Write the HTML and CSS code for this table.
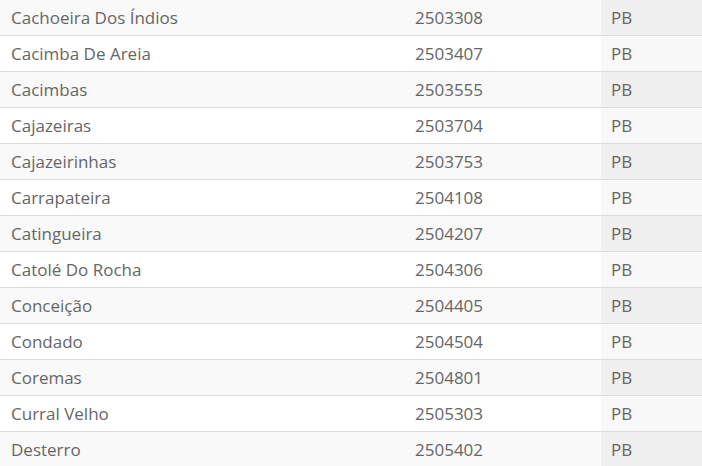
FILE: index.html
```html
<!DOCTYPE html>
<html>
<head>
<meta charset="utf-8">
<link rel="stylesheet" href="styles.css">
</head>
<body>
<table class="cities">
<colgroup><col class="c-name"><col class="c-code"><col class="c-uf"></colgroup>
<tbody>
<tr><td class="name">Cachoeira Dos Índios</td><td class="code">2503308</td><td class="uf">PB</td></tr>
<tr><td class="name">Cacimba De Areia</td><td class="code">2503407</td><td class="uf">PB</td></tr>
<tr><td class="name">Cacimbas</td><td class="code">2503555</td><td class="uf">PB</td></tr>
<tr><td class="name">Cajazeiras</td><td class="code">2503704</td><td class="uf">PB</td></tr>
<tr><td class="name">Cajazeirinhas</td><td class="code">2503753</td><td class="uf">PB</td></tr>
<tr><td class="name">Carrapateira</td><td class="code">2504108</td><td class="uf">PB</td></tr>
<tr><td class="name">Catingueira</td><td class="code">2504207</td><td class="uf">PB</td></tr>
<tr><td class="name">Catolé Do Rocha</td><td class="code">2504306</td><td class="uf">PB</td></tr>
<tr><td class="name">Conceição</td><td class="code">2504405</td><td class="uf">PB</td></tr>
<tr><td class="name">Condado</td><td class="code">2504504</td><td class="uf">PB</td></tr>
<tr><td class="name">Coremas</td><td class="code">2504801</td><td class="uf">PB</td></tr>
<tr><td class="name">Curral Velho</td><td class="code">2505303</td><td class="uf">PB</td></tr>
<tr><td class="name">Desterro</td><td class="code">2505402</td><td class="uf">PB</td></tr>
</tbody>
</table>
</body>
</html>
```
FILE: styles.css
```css
html, body {
  margin: 0;
  padding: 0;
  background: #ffffff;
}
.cities {
  width: 702px;
  table-layout: fixed;
  border-collapse: collapse;
  font-family: "Open Sans", "DejaVu Sans", sans-serif;
  font-size: 17px;
  color: #666666;
}
.c-name { width: 404px; }
.c-code { width: 197px; }
.c-uf { width: 101px; }
.cities td {
  height: 35px;
  padding: 0 0 0 11px;
  border-bottom: 1px solid #dddddd;
  vertical-align: middle;
  line-height: 20px;
  white-space: nowrap;
}
.cities tr:last-child td {
  border-bottom: none;
}
.cities td.uf { padding-left: 10px; }
.cities tr:nth-child(odd) td { background: #f9f9f9; }
.cities tr:nth-child(even) td { background: #ffffff; }
.cities tr:nth-child(odd) td.uf { background: #f0f0f0; }
.cities tr:nth-child(even) td.uf { background: #f8f8f8; }
```
